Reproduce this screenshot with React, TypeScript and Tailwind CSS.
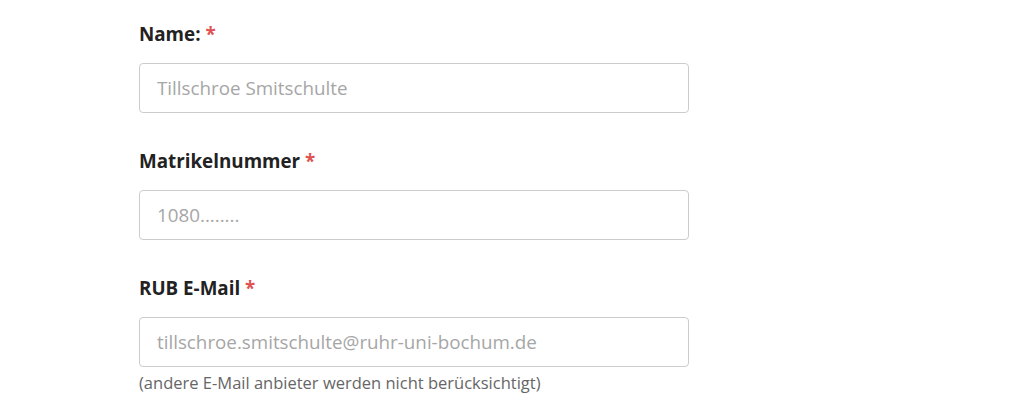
import React from "react";

interface Feld {
  id: string;
  label: string;
  placeholder: string;
  type: string;
  hinweis?: string;
}

const felder: Feld[] = [
  { id: "name", label: "Name:", placeholder: "Tillschroe Smitschulte", type: "text" },
  { id: "matrikel", label: "Matrikelnummer", placeholder: "1080........", type: "text" },
  {
    id: "email",
    label: "RUB E-Mail",
    placeholder: "tillschroe.smitschulte@ruhr-uni-bochum.de",
    type: "email",
    hinweis: "(andere E-Mail anbieter werden nicht berücksichtigt)",
  },
];

const App: React.FC = () => {
  return (
    <div className="min-h-[418px] bg-white font-['Open_Sans',sans-serif]">
      <form className="w-[550px] ml-[139px] pt-[21px]">
        {felder.map((f) => (
          <div key={f.id} className="mb-[35px]">
            {/* Label mit Pflichtfeld-Stern */}
            <label htmlFor={f.id} className="block text-[18.8px] leading-[27px] font-bold text-[#222] mb-[15px]">
              {f.label} <span className="text-[#e05252]">*</span>
            </label>
            <input
              id={f.id}
              type={f.type}
              placeholder={f.placeholder}
              className="block w-full h-[50px] px-[17px] text-[18.8px] text-[#333] placeholder:text-[#a6a6a6] border border-[#cccccc] rounded-[4px] outline-none"
            />
            {f.hinweis && (
              <p className="text-[16.5px] leading-[24px] text-[#666] mt-[4px]">{f.hinweis}</p>
            )}
          </div>
        ))}
      </form>
    </div>
  );
};

export default App;
